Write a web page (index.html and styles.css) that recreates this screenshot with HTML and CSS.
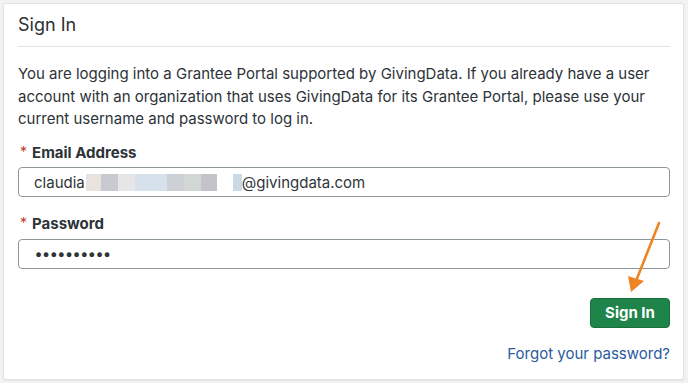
FILE: index.html
```html
<!DOCTYPE html>
<html lang="en">
<head>
<meta charset="utf-8">
<title>Sign In</title>
<link rel="stylesheet" href="styles.css">
</head>
<body>
<div class="card">
  <h1 class="title">Sign In</h1>
  <hr class="divider">
  <p class="intro">You are logging into a Grantee Portal supported by GivingData. If you already have a user account with an organization that uses GivingData for its Grantee Portal, please use your current username and password to log in.</p>
  <div class="group">
    <label class="label"><span class="req">*</span>Email Address</label>
    <div class="field">
      <span class="val">claudia</span>
      <span class="blur">
        <span class="b" style="width:15px;background:#e9e2de"></span><span class="b" style="width:17px;background:#c9c9d1"></span><span class="b" style="width:17px;background:#e6e6e9"></span><span class="b" style="width:32px;background:#d6e1eb"></span><span class="b" style="width:17px;background:#ccd0d5"></span><span class="b" style="width:17px;background:#d1d7d5"></span><span class="b" style="width:16px;background:#c3c3c9"></span><span class="b" style="width:16px;background:#ffffff"></span><span class="b" style="width:9px;background:#c9d9e6"></span>
      </span>
      <span class="val">@givingdata.com</span>
    </div>
  </div>
  <div class="group">
    <label class="label"><span class="req">*</span>Password</label>
    <div class="field"><span class="dots">••••••••••</span></div>
  </div>
  <div class="actions">
    <button class="btn" type="button">Sign In</button>
    <a class="forgot" href="#">Forgot your password?</a>
  </div>
  <svg class="arrow" width="688" height="383" viewBox="0 0 688 383" aria-hidden="true">
    <line x1="659" y1="223" x2="636" y2="281" stroke="#ef8425" stroke-width="2.6" stroke-linecap="round"/>
    <polygon points="631,292 628,276 644,281" fill="#ef8425"/>
  </svg>
</div>
</body>
</html>
```
FILE: styles.css
```css
* { box-sizing: border-box; }
html, body { margin: 0; padding: 0; }
body {
  background: #f2f2f2;
  font-family: Inter, "Noto Sans", sans-serif;
  color: #2d3338;
  width: 688px;
  height: 383px;
  overflow: hidden;
}
.card {
  margin: 3px 0 0 3px;
  width: 681px;
  height: 377px;
  background: #ffffff;
  border: 1px solid #e3e3e3;
  border-radius: 3px;
  box-shadow: 0 1px 2px rgba(0,0,0,0.06);
  padding: 10px 13px 0 14px;
  display: flex;
  flex-direction: column;
}
.title {
  margin: 0;
  font-size: 18px;
  font-weight: 400;
  line-height: 22px;
  color: #2b2f33;
}
.divider {
  margin: 10px 0 0 0;
  border: 0;
  border-top: 1px solid #e4e4e4;
  height: 0;
}
.intro {
  margin: 16px 0 0 0;
  font-size: 15px;
  line-height: 22.5px;
  color: #2d3338;
}
.group {
  display: flex;
  flex-direction: column;
}
.label {
  margin-top: 11px;
  font-size: 15px;
  line-height: 22.5px;
  font-weight: 700;
  color: #2d3338;
}
.group + .group .label { margin-top: 16px; }
.req {
  color: #c0392b;
  font-weight: 400;
  font-size: 14px;
  margin: 0 5px 0 2px;
  position: relative;
  top: -1px;
}
.field {
  margin-top: 3px;
  height: 30px;
  border: 1px solid #8d969a;
  border-radius: 4px;
  padding: 0 15px;
  display: flex;
  align-items: center;
  font-size: 15px;
  color: #2f3539;
}
.blur {
  display: flex;
  height: 17px;
  margin-left: 1px;
}
.b { display: block; height: 100%; }
.dots {
  font-size: 15px;
  letter-spacing: 0.5px;
  font-weight: 700;
  color: #2f3539;
  margin-left: 1px;
}
.actions {
  display: flex;
  flex-direction: column;
  align-items: flex-end;
}
.btn {
  margin-top: 29px;
  width: 80px;
  height: 30px;
  background: #1e8449;
  border: 1px solid #18703d;
  border-radius: 4px;
  color: #ffffff;
  font-family: Inter, "Noto Sans", sans-serif;
  font-size: 15px;
  font-weight: 700;
  padding: 0;
}
.forgot {
  margin-top: 15px;
  font-size: 15px;
  line-height: 22.5px;
  color: #2a5b9c;
  text-decoration: none;
}
.arrow {
  position: absolute;
  left: 0;
  top: 0;
  pointer-events: none;
}
```
